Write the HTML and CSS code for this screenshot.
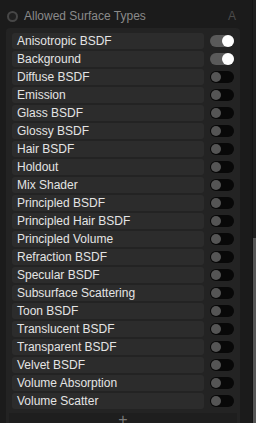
FILE: index.html
```html
<!DOCTYPE html>
<html lang="en">
<head>
    <meta charset="UTF-8" />
    <title>Allowed Surface Types</title>
    <link rel="stylesheet" href="styles.css">
</head>
<body>
    <div class="main">
        <div class="header">
            <span class="radio"></span>
            <span class="title">Allowed Surface Types</span>
            <span class="auto">A</span>
        </div>

        <div class="panel">
            <div class="list">
                <div class="row"><span class="label">Anisotropic BSDF</span><span class="toggle on"></span></div>
                <div class="row"><span class="label">Background</span><span class="toggle on"></span></div>
                <div class="row"><span class="label">Diffuse BSDF</span><span class="toggle"></span></div>
                <div class="row"><span class="label">Emission</span><span class="toggle"></span></div>
                <div class="row"><span class="label">Glass BSDF</span><span class="toggle"></span></div>
                <div class="row"><span class="label">Glossy BSDF</span><span class="toggle"></span></div>
                <div class="row"><span class="label">Hair BSDF</span><span class="toggle"></span></div>
                <div class="row"><span class="label">Holdout</span><span class="toggle"></span></div>
                <div class="row"><span class="label">Mix Shader</span><span class="toggle"></span></div>
                <div class="row"><span class="label">Principled BSDF</span><span class="toggle"></span></div>
                <div class="row"><span class="label">Principled Hair BSDF</span><span class="toggle"></span></div>
                <div class="row"><span class="label">Principled Volume</span><span class="toggle"></span></div>
                <div class="row"><span class="label">Refraction BSDF</span><span class="toggle"></span></div>
                <div class="row"><span class="label">Specular BSDF</span><span class="toggle"></span></div>
                <div class="row"><span class="label">Subsurface Scattering</span><span class="toggle"></span></div>
                <div class="row"><span class="label">Toon BSDF</span><span class="toggle"></span></div>
                <div class="row"><span class="label">Translucent BSDF</span><span class="toggle"></span></div>
                <div class="row"><span class="label">Transparent BSDF</span><span class="toggle"></span></div>
                <div class="row"><span class="label">Velvet BSDF</span><span class="toggle"></span></div>
                <div class="row"><span class="label">Volume Absorption</span><span class="toggle"></span></div>
                <div class="row"><span class="label">Volume Scatter</span><span class="toggle"></span></div>
            </div>
            <div class="add">+</div>
        </div>
    </div>

    <div class="scrollbar">
        <div class="thumb"></div>
    </div>
</body>
</html>
```

FILE: styles.css
```css
body {
    margin: 0;
    padding: 0;
    width: 256px;
    height: 423px;
    overflow: hidden;
    display: flex;
    background-color: #1b1b1b;
    font-family: 'Liberation Sans', Arial, sans-serif;
    font-size: 12px;
}

.main {
    flex: 1;
    padding: 0 12px 0 6px;
    min-width: 0;
}

.header {
    height: 24px;
    padding-top: 4px;
    display: flex;
    align-items: center;
}

.radio {
    width: 7px;
    height: 7px;
    margin-left: 1px;
    border: 2px solid #474747;
    border-radius: 50%;
    background-color: #202020;
}

.title {
    margin-left: 6px;
    color: #8a8a8a;
    flex: 1;
}

.auto {
    color: #4c4c4c;
    margin-right: 4px;
}

.panel {
    background-color: #232323;
    border-radius: 4px 4px 0 0;
    padding: 5px 3px 0 3px;
}

.list {
    display: flex;
    flex-direction: column;
    gap: 2px;
    padding: 0 3px;
}

.row {
    display: flex;
    align-items: center;
    gap: 6px;
    height: 16px;
}

.label {
    flex: 1;
    height: 16px;
    line-height: 16px;
    padding-left: 5px;
    background-color: #2c2c2c;
    border-radius: 3px;
    color: #e4e4e4;
    white-space: nowrap;
}

.toggle {
    width: 24px;
    height: 12px;
    border-radius: 6px;
    background-color: #080808;
    position: relative;
}

.toggle::after {
    content: '';
    position: absolute;
    left: 1px;
    top: 1px;
    width: 10px;
    height: 10px;
    border-radius: 50%;
    background-color: #555555;
}

.toggle.on {
    background-color: #5a5a5a;
}

.toggle.on::after {
    left: 12px;
    top: 0;
    width: 12px;
    height: 12px;
    background-color: #ffffff;
}

.add {
    margin-top: 4px;
    height: 20px;
    background-color: #1e1e1e;
    color: #7a7a7a;
    text-align: center;
    font-size: 16px;
    line-height: 14px;
}

.scrollbar {
    width: 3px;
    border-left: 1px solid #151515;
    background-color: #1f1f1f;
    display: flex;
    flex-direction: column;
    justify-content: flex-end;
}

.thumb {
    height: 185px;
    background-color: #555555;
}
```
